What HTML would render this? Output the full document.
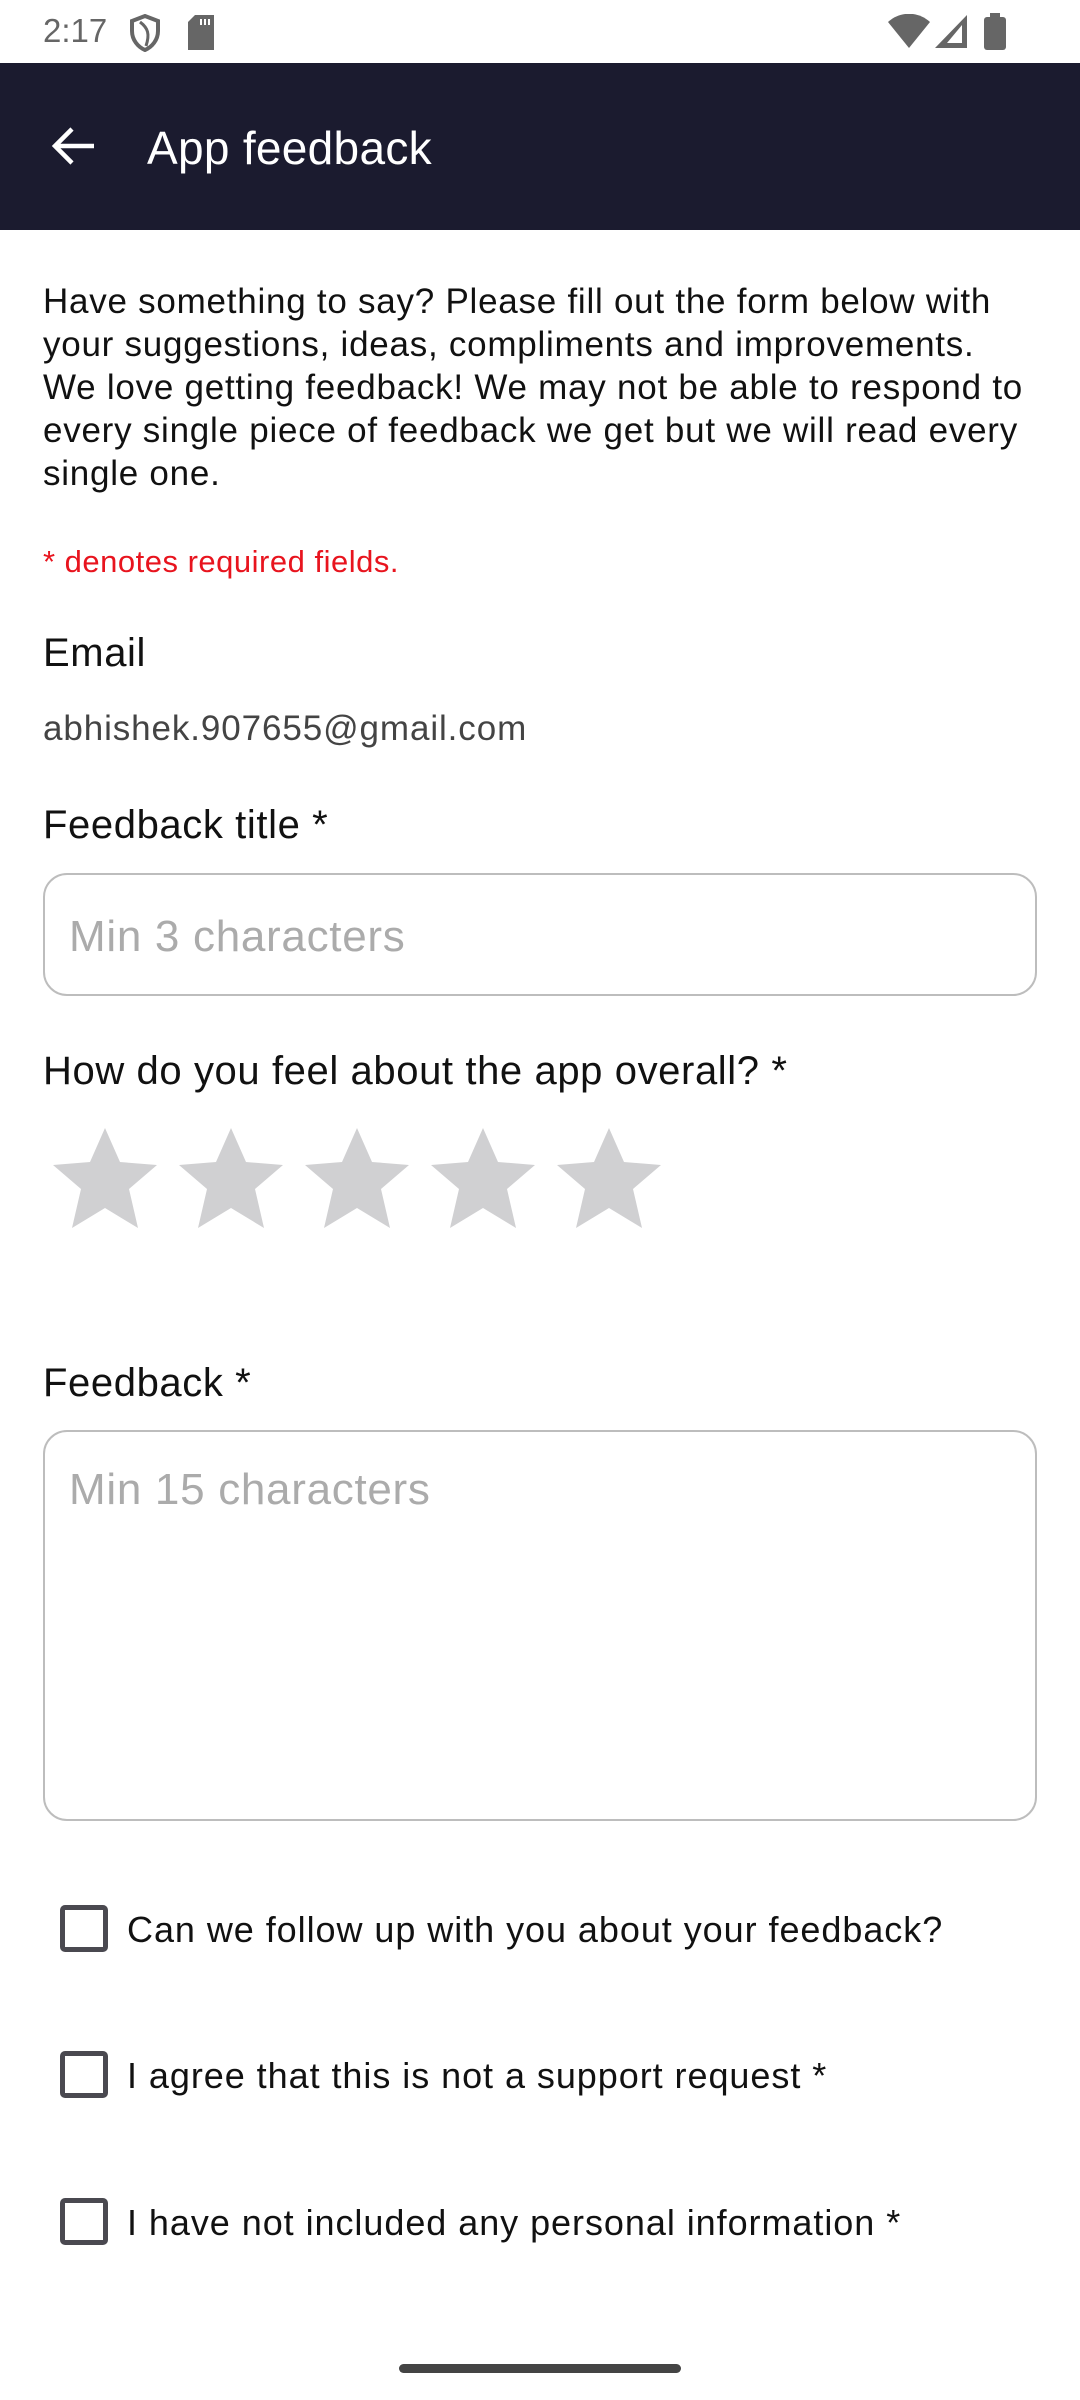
<!DOCTYPE html>
<html><head><meta charset="utf-8"><style>
*{margin:0;padding:0;box-sizing:border-box}
body{width:1080px;height:2400px;background:#fff;font-family:"Liberation Sans",sans-serif;position:relative;overflow:hidden;color:#111}
.a{position:absolute;white-space:nowrap}
.tb{position:absolute;left:0;top:63px;width:1080px;height:167px;background:#1b1b2f}
.box{position:absolute;left:43px;width:994px;border:2px solid #bdbdbd;border-radius:24px}
.ph{color:#ababab;font-size:44px;letter-spacing:0.7px}
.cb{position:absolute;left:60px;width:48px;height:47px;border:5px solid #4a4950;border-radius:5px}
.ct{font-size:36px;letter-spacing:0.95px;color:#111}
.lb{font-size:40px;letter-spacing:0.6px}
</style></head><body>
<div class="a" style="left:43px;top:12px;font-size:33px;color:#666">2:17</div>
<svg class="a" style="left:128px;top:14px" width="34" height="38" viewBox="0 0 34 38"><path d="M17 2L4 7v10c0 9 6 16 13 19 7-3 13-10 13-19V7z" fill="none" stroke="#666" stroke-width="4"/><path d="M12 8c8 6 10 12 6 24" fill="none" stroke="#666" stroke-width="3"/></svg>
<svg class="a" style="left:188px;top:15px" width="26" height="35"><path d="M7 0h19v35H0V7z" fill="#666"/><rect x="12" y="4" width="2" height="6" fill="#fff"/><rect x="16" y="4" width="2" height="6" fill="#fff"/><rect x="20" y="4" width="2" height="6" fill="#fff"/></svg>
<svg class="a" style="left:888px;top:14px" width="42" height="34"><path d="M21 34L0 8C12-3 30-3 42 8z" fill="#666"/></svg>
<svg class="a" style="left:935px;top:15px" width="32" height="33"><path d="M32 0V33H0z" fill="#666"/><path d="M27 10V28H12z" fill="#fff"/></svg>
<svg class="a" style="left:984px;top:13px" width="22" height="37"><rect x="6" y="0" width="10" height="5" fill="#666"/><rect x="0" y="4" width="22" height="33" rx="3" fill="#666"/></svg>
<div class="tb"></div>
<svg class="a" style="left:50px;top:126px" width="46" height="40" viewBox="0 0 46 40"><path d="M44 20H6M22 3L5 20l17 17" fill="none" stroke="#fff" stroke-width="4.5"/></svg>
<div class="a" style="left:147px;top:121px;font-size:46px;letter-spacing:0.3px;color:#fff">App feedback</div>
<div class="a" style="left:43px;top:280px;font-size:35px;letter-spacing:0.75px;line-height:43px;color:#111">Have something to say? Please fill out the form below with<br>your suggestions, ideas, compliments and improvements.<br>We love getting feedback! We may not be able to respond to<br>every single piece of feedback we get but we will read every<br>single one.</div>
<div class="a" style="left:43px;top:544px;font-size:31px;letter-spacing:0.5px;color:#e8141e">* denotes required fields.</div>
<div class="a lb" style="left:43px;top:631px">Email</div>
<div class="a" style="left:43px;top:709px;font-size:35px;letter-spacing:0.9px;color:#444">abhishek.907655@gmail.com</div>
<div class="a lb" style="left:43px;top:803px">Feedback title *</div>
<div class="box" style="top:873px;height:123px"></div>
<div class="a ph" style="left:69px;top:912px">Min 3 characters</div>
<div class="a lb" style="left:43px;top:1049px">How do you feel about the app overall? *</div>
<svg class="a" style="left:53px;top:1128px" width="610" height="101"><defs><polygon id="s" points="52,0 67,34 104,37 76,61 85,100 52,80 19,100 28,61 0,37 37,34" fill="#d0d0d2"/></defs><use href="#s"/><use href="#s" x="126"/><use href="#s" x="252"/><use href="#s" x="378"/><use href="#s" x="504"/></svg>
<div class="a lb" style="left:43px;top:1361px">Feedback *</div>
<div class="box" style="top:1430px;height:391px"></div>
<div class="a ph" style="left:69px;top:1465px">Min 15 characters</div>
<div class="cb" style="top:1905px"></div>
<div class="a ct" style="left:127px;top:1909px">Can we follow up with you about your feedback?</div>
<div class="cb" style="top:2051px"></div>
<div class="a ct" style="left:127px;top:2055px">I agree that this is not a support request *</div>
<div class="cb" style="top:2198px"></div>
<div class="a ct" style="left:127px;top:2202px">I have not included any personal information *</div>
<div class="a" style="left:399px;top:2364px;width:282px;height:9px;border-radius:5px;background:#444"></div>
</body></html>
